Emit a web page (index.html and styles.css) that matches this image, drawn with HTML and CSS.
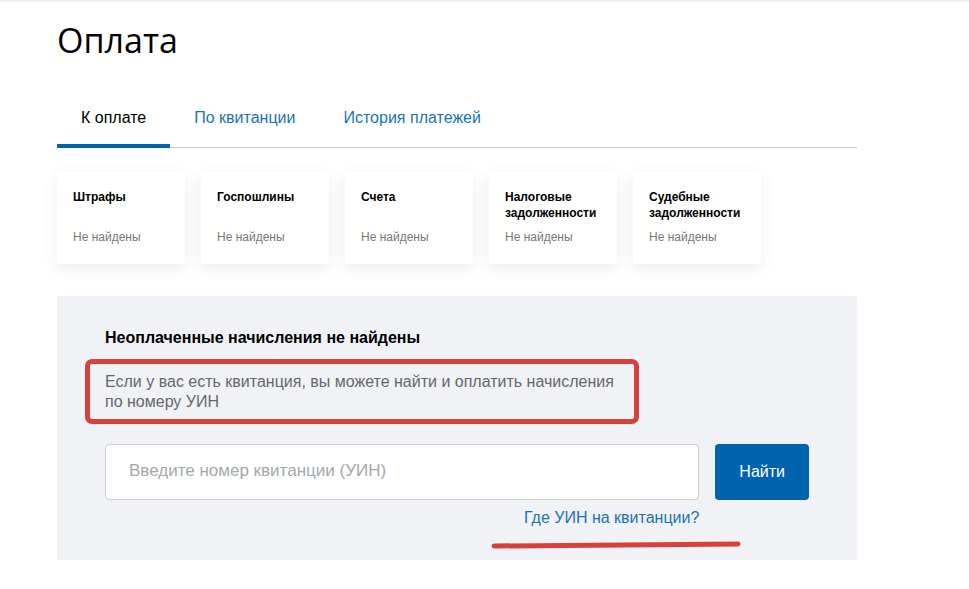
FILE: index.html
```html
<!DOCTYPE html>
<html lang="ru">
<head>
  <meta charset="UTF-8">
  <meta name="viewport" content="width=device-width, initial-scale=1.0">
  <title>Оплата</title>
  <link rel="stylesheet" href="styles.css">
</head>
<body>

  <main class="page">
    <h1>Оплата</h1>

    <nav class="tabs">
      <a href="#" class="tab active">К оплате</a>
      <a href="#" class="tab">По квитанции</a>
      <a href="#" class="tab">История платежей</a>
    </nav>

    <div class="cards">
      <div class="card">
        <h2>Штрафы</h2>
        <p>Не найдены</p>
      </div>
      <div class="card">
        <h2>Госпошлины</h2>
        <p>Не найдены</p>
      </div>
      <div class="card">
        <h2>Счета</h2>
        <p>Не найдены</p>
      </div>
      <div class="card">
        <h2>Налоговые задолженности</h2>
        <p>Не найдены</p>
      </div>
      <div class="card">
        <h2>Судебные задолженности</h2>
        <p>Не найдены</p>
      </div>
    </div>

    <section class="search">
      <h2>Неоплаченные начисления не найдены</h2>
      <label for="uin" class="hint">Если у вас есть квитанция, вы можете найти и оплатить начисления по номеру УИН</label>

      <form class="search-form">
        <div class="field">
          <input type="text" id="uin" placeholder="Введите номер квитанции (УИН)">
          <a href="#" class="help">Где УИН на квитанции?
            <svg class="underline" width="250" height="8" viewBox="0 0 250 8">
              <line x1="3" y1="5" x2="247" y2="3" stroke="#d8403a" stroke-width="5" stroke-linecap="round"/>
            </svg>
          </a>
        </div>
        <button type="button">Найти</button>
      </form>
    </section>
  </main>

</body>
</html>
```
FILE: styles.css
```css
body {
  font-family: 'Liberation Sans', Arial, sans-serif;
  font-size: 16px;
  line-height: 20px;
  background-color: #fff;
  border-top: 2px solid #eee;
  color: #000;
  margin: 0;
}

.page {
  max-width: 800px;
  margin: 0 57px;
  padding: 14px 0 28px;
}

h1, h2, p {
  margin: 0;
}

h1 {
  font-family: 'Open Sans', 'Noto Sans', sans-serif;
  font-size: 34px;
  font-weight: 400;
  line-height: 48px;
}

a {
  color: #1a73b5;
  text-decoration: none;
}

.tabs {
  display: flex;
  margin-top: 26px;
  border-bottom: 1px solid #c8c8c8;
}

.tab {
  padding: 18px 24px 16px;
  border-bottom: 4px solid transparent;
  margin-bottom: -1px;
}

.tab.active {
  color: #000;
  border-color: #0063b0;
}

.cards {
  display: flex;
  gap: 16px;
  margin-top: 24px;
}

.card {
  box-sizing: border-box;
  width: 128px;
  padding: 17px 16px 19px;
  border-radius: 4px;
  background-color: #fff;
  box-shadow: 0 4px 16px rgba(0, 0, 0, 0.08);
  font-size: 12px;
  line-height: 16px;
}

.card h2 {
  font-size: 12px;
  min-height: 32px;
}

.card p {
  margin-top: 8px;
  color: #777;
}

.search {
  margin-top: 32px;
  padding: 32px 48px;
  background-color: #f1f2f6;
}

.search h2 {
  font-size: 16px;
}

.hint {
  display: block;
  position: relative;
  max-width: 520px;
  margin-top: 24px;
  color: #66686c;
}

/* red frame around the hint */
.hint::before {
  content: '';
  position: absolute;
  inset: -13px -14px -12px -20px;
  border: 5px solid #d8403a;
  border-radius: 7px;
}

.search-form {
  display: flex;
  align-items: flex-start;
  gap: 16px;
  margin-top: 32px;
}

.field {
  flex: 1;
  text-align: right;
}

input {
  display: block;
  box-sizing: border-box;
  width: 100%;
  height: 56px;
  padding: 0 23px 2px;
  margin-bottom: 8px;
  border: 1px solid #cdcfd3;
  border-radius: 4px;
  background-color: #fff;
  font: inherit;
  font-size: 17px;
}

input::placeholder {
  color: #a3a9ab;
}

button {
  height: 56px;
  padding: 0 24px;
  border: none;
  border-radius: 4px;
  background-color: #0063b0;
  color: #fff;
  font: inherit;
  cursor: pointer;
}

button:hover {
  background-color: #00529a;
}

.help {
  position: relative;
}

.underline {
  position: absolute;
  top: 32px;
  right: -42px;
}
```
